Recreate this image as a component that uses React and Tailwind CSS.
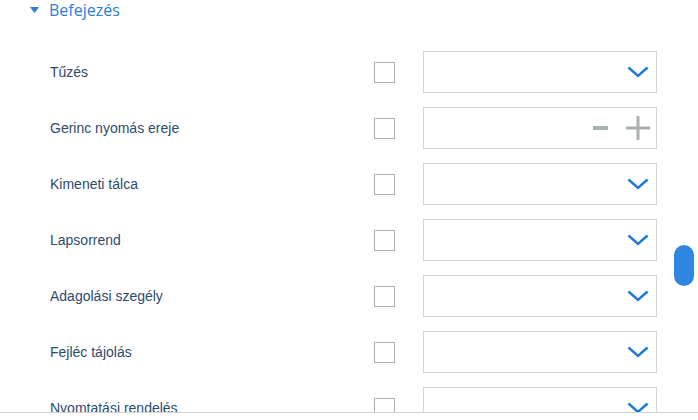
import React from "react";

const rows = [
    { label: "Tűzés", kind: "select" },
    { label: "Gerinc nyomás ereje", kind: "stepper" },
    { label: "Kimeneti tálca", kind: "select" },
    { label: "Lapsorrend", kind: "select" },
    { label: "Adagolási szegély", kind: "select" },
    { label: "Fejléc tájolás", kind: "select" },
    { label: "Nyomtatási rendelés", kind: "select" },
];

function Chevron() {
    return (
        <svg width="22" height="12" viewBox="0 0 22 12" className="mr-[7px]">
            <path d="M1.5 1.5 L11 10 L20.5 1.5" fill="none" stroke="#1a78d6" strokeWidth="2.4" />
        </svg>
    );
}

function Stepper() {
    return (
        <div className="flex items-center gap-[16px] mr-[4px]">
            <div className="w-[15px] h-[4px] bg-[#a9b0b0]" />
            <svg width="28" height="28" viewBox="0 0 28 28">
                <path d="M14 2 V26 M2 14 H26" stroke="#a9b0b0" strokeWidth="3" />
            </svg>
        </div>
    );
}

export default function App() {
    return (
        <div className="relative w-[698px] h-[420px] bg-white overflow-hidden" style={{ fontFamily: "'Liberation Sans', Arial, sans-serif" }}>
            <div className="h-[413px] overflow-hidden border-b border-[#d4d4d4]">
                <div className="h-[44px] flex items-start pt-[1px]">
                    <svg width="10" height="8" viewBox="0 0 10 8" className="ml-[30px] mt-[6px]">
                        <path d="M0 0 H9 L4.5 6 Z" fill="#2a7ed6" />
                    </svg>
                    <span className="ml-[9px] text-[16px] leading-[18px] text-[#2a7ed6]" style={{ fontFamily: "'Open Sans', sans-serif" }}>
                        Befejezés
                    </span>
                </div>
                {rows.map((row) => (
                    <div key={row.label} className="h-[56px] flex items-center">
                        <div className="w-[374px] pl-[50px] text-[14px] text-[#2d4b6f]">{row.label}</div>
                        <div className="w-[21px] h-[21px] border border-[#a9b0b0]" />
                        <div className="ml-[28px] w-[234px] h-[42px] border border-[#d4d4d4] flex items-center justify-end">
                            {row.kind === "select" ? <Chevron /> : <Stepper />}
                        </div>
                    </div>
                ))}
            </div>
            <div className="absolute left-[674px] top-[245px] w-[20px] h-[41px] rounded-full bg-[#2e86de]" />
        </div>
    );
}
